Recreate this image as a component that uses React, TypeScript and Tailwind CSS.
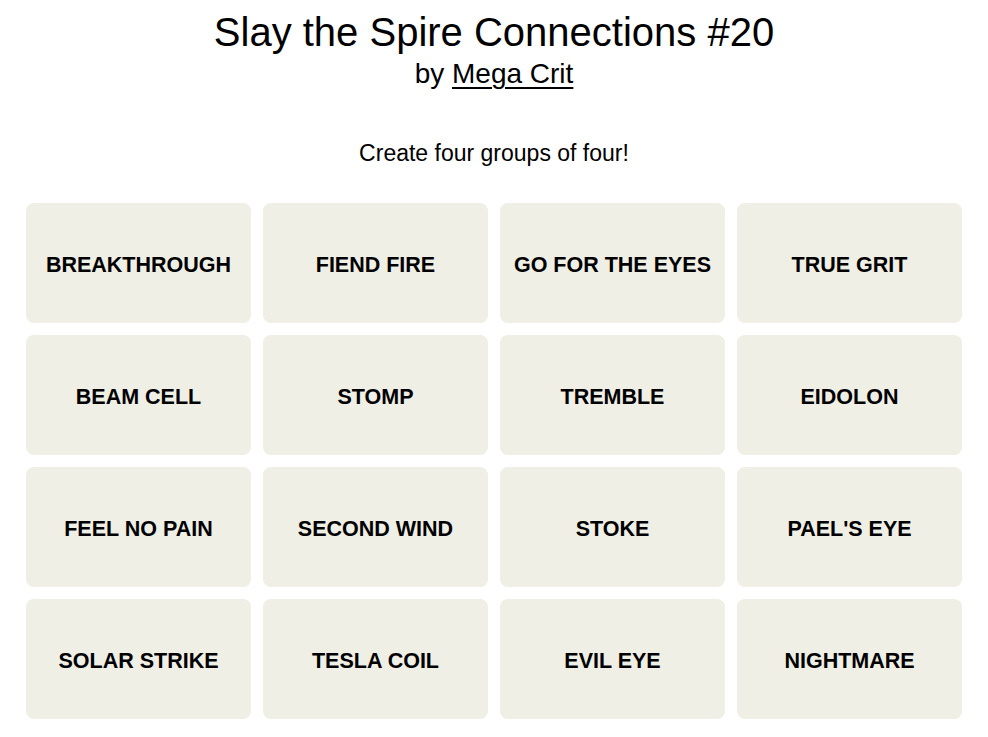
const words = [
  "BREAKTHROUGH", "FIEND FIRE", "GO FOR THE EYES", "TRUE GRIT",
  "BEAM CELL", "STOMP", "TREMBLE", "EIDOLON",
  "FEEL NO PAIN", "SECOND WIND", "STOKE", "PAEL'S EYE",
  "SOLAR STRIKE", "TESLA COIL", "EVIL EYE", "NIGHTMARE",
];

export default function App() {
  return (
    <div className="min-h-screen bg-white text-black font-['Liberation_Sans',Arial,sans-serif]">
      <div className="flex flex-col items-center pt-[8px]">
        <h1 className="text-[40px] leading-[48px]">Slay the Spire Connections #20</h1>
        <p className="text-[28px] leading-[36px]">
          by <a className="underline decoration-2 underline-offset-[4px]">Mega Crit</a>
        </p>
        <p className="mt-[47px] text-[23px] leading-[28px]">Create four groups of four!</p>
      </div>
      <div className="mx-[26px] mt-[36px] grid grid-cols-4 gap-[12px]">
        {words.map((w) => (
          <div
            key={w}
            className="h-[120px] rounded-[8px] bg-[#efefe6] flex items-center justify-center pt-[4px] text-[21.5px] font-bold"
          >
            {w}
          </div>
        ))}
      </div>
    </div>
  );
}
